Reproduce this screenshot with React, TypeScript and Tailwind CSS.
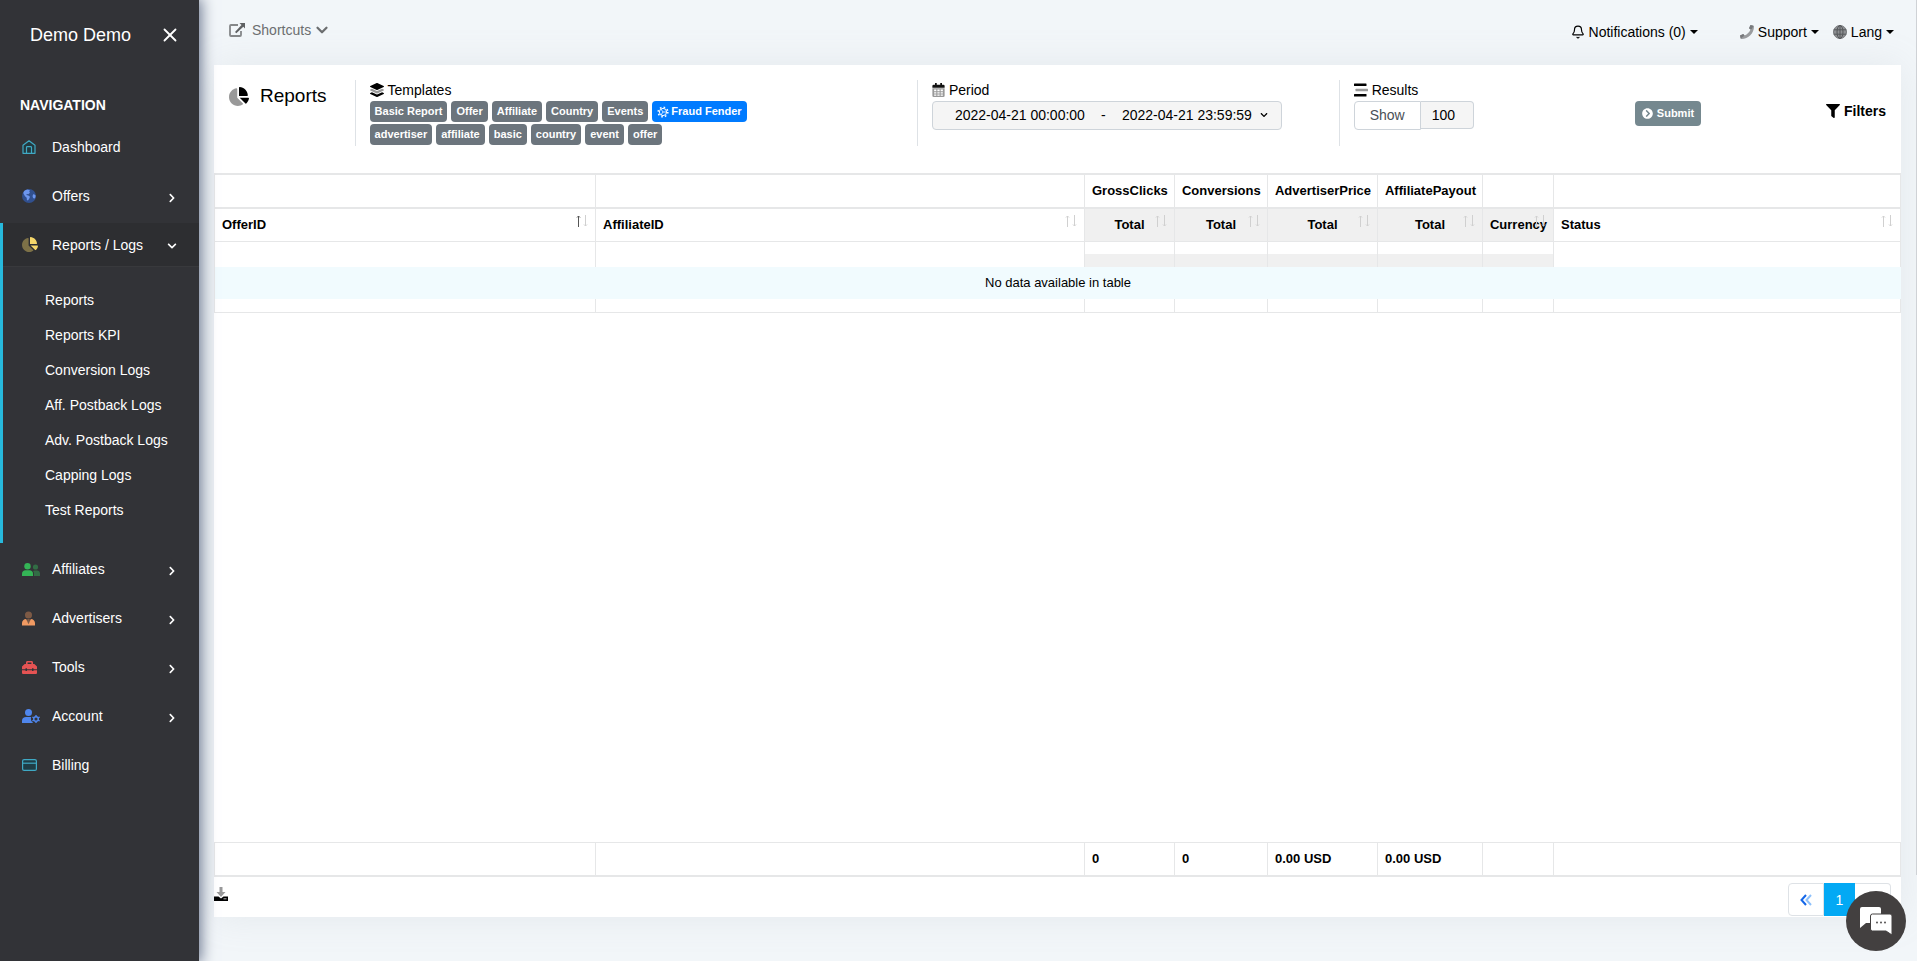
import { useState } from "react";
import type { ReactNode } from "react";
import { FaFilter, FaChevronRight, FaChevronDown, FaChevronCircleRight } from "react-icons/fa";
import { X, ChevronDown, Bell } from "lucide-react";

type IconProps = { className?: string };

function PieIcon({ className }: IconProps) {
  return (
    <svg viewBox="0 0 544 512" fill="currentColor" className={className} aria-hidden="true">
      <path d="M527.79 288H290.5l158.03 158.03c6.04 6.04 15.98 6.53 22.19.68 38.7-36.46 65.32-85.61 73.13-140.86 1.34-9.46-6.51-17.85-16.06-17.85zm-15.83-64.8C503.72 103.74 408.26 8.28 288.8.04 279.68-.59 272 7.1 272 16.24V240h223.77c9.14 0 16.82-7.68 16.19-16.8z" />
      <path
        opacity="0.4"
        d="M224 288V50.71c0-9.55-8.39-17.4-17.84-16.06C86.99 51.49-4.1 155.6.14 280.37 4.5 408.51 114.83 513.59 243.03 511.98c50.4-.63 96.97-16.87 135.26-44.03 7.9-5.6 8.42-17.23 1.57-24.08L224 288z"
      />
    </svg>
  );
}

function LayersIcon({ className }: IconProps) {
  return (
    <svg viewBox="0 0 512 512" fill="currentColor" className={className} aria-hidden="true">
      <path d="M12.41 148.02l232.94 105.67c6.8 3.09 14.49 3.09 21.29 0l232.94-105.67c16.55-7.51 16.55-32.52 0-40.03L266.65 2.31a25.6 25.6 0 0 0-21.29 0L12.41 107.98c-16.55 7.51-16.55 32.53 0 40.04z" />
      <path
        opacity="0.4"
        d="M499.59 236.3l-58.09-26.33-161.64 73.27a57.6 57.6 0 0 1-47.72 0L70.51 209.97l-58.1 26.33c-16.55 7.5-16.55 32.5 0 40l232.94 105.59c6.8 3.08 14.49 3.08 21.29 0L499.59 276.3c16.55-7.5 16.55-32.5 0-40z"
      />
      <path d="M499.59 364.3l-58.09-26.33-161.64 73.27a57.6 57.6 0 0 1-47.72 0L70.51 337.97l-58.1 26.33c-16.55 7.5-16.55 32.5 0 40l232.94 105.59c6.8 3.08 14.49 3.08 21.29 0L499.59 404.3c16.55-7.5 16.55-32.5 0-40z" />
    </svg>
  );
}

function CalendarIcon({ className }: IconProps) {
  return (
    <svg viewBox="0 0 14 16" className={className} aria-hidden="true">
      <path d="M0 5.5V3.5A1.5 1.5 0 0 1 1.5 2H3V0h2v2h4V0h2v2h1.5A1.5 1.5 0 0 1 14 3.5v2z" fill="#111" />
      <path d="M0 6h14v8.5a1.5 1.5 0 0 1-1.5 1.5h-11A1.5 1.5 0 0 1 0 14.5z" fill="#999" />
      <path d="M2 7.5h2.5v2H2zm3.7 0h2.6v2H5.7zm3.8 0H12v2H9.5zM2 10.5h2.5v1.5H2zm3.7 0h2.6v1.5H5.7zm3.8 0H12v1.5H9.5zM2 13h2.5v1.5H2zm3.7 0h2.6v1.5H5.7zm3.8 0H12v1.5H9.5z" fill="#fff" />
    </svg>
  );
}

function StreamIcon({ className }: IconProps) {
  return (
    <svg viewBox="0 0 14 14" fill="currentColor" className={className} aria-hidden="true">
      <rect x="0" y="0.5" width="12.5" height="2.6" rx="0.5" />
      <rect x="1.5" y="5.7" width="12.5" height="2.6" rx="0.5" opacity="0.4" />
      <rect x="0" y="10.9" width="12.5" height="2.6" rx="0.5" />
    </svg>
  );
}

function HouseIcon({ className }: IconProps) {
  return (
    <svg viewBox="0 0 14 14" fill="none" stroke="currentColor" strokeWidth="1.2" strokeLinejoin="round" className={className} aria-hidden="true">
      <path d="M1 5.3L7 .8l6 4.5v8H1z" fill="#23383e" />
      <path d="M4.5 13V7.5a.8.8 0 0 1 .8-.8h3.4a.8.8 0 0 1 .8.8V13" />
    </svg>
  );
}

function EarthIcon({ className }: IconProps) {
  return (
    <svg viewBox="0 0 14 14" className={className} aria-hidden="true">
      <circle cx="7" cy="7" r="7" fill="#31508f" />
      <path d="M2 2.2C3.200 1 4.500.5 5.800.4L8 1.500 7.200 2.800l.8.9-1.700 1.600-1.500-.2-.4 1 2 .4 1.600 1.200-.8 2-1.300 1.700-1-.4-.2-2.300-1.700-1.500L2 5.500 1.300 4zM11.500 5l2 1.200v2l-1.300 1.500-1.200-.9-.5-1.700z" fill="#6d96ee" />
    </svg>
  );
}

function UsersIcon({ className }: IconProps) {
  return (
    <svg viewBox="0 0 18 13" fill="currentColor" className={className} aria-hidden="true">
      <circle cx="5.5" cy="3.2" r="3.2" />
      <path d="M0 13v-2.2C0 8.6 1.6 7.2 3.5 7.2h4c2 0 3.5 1.4 3.5 3.6V13z" />
      <g opacity="0.45">
        <circle cx="13.5" cy="4" r="2.6" />
        <path d="M12 13v-2.5c0-1.2-.4-2-1-2.6.5-.3 1-.5 1.6-.5h2.4c1.7 0 3 1.2 3 3V13z" />
      </g>
    </svg>
  );
}

function UserTieIcon({ className }: IconProps) {
  return (
    <svg viewBox="0 0 14 15" className={className} aria-hidden="true">
      <circle cx="7" cy="3.8" r="3.8" fill="#7d5a45" />
      <path d="M5.8 8h2.4l.6 3-1.8 4-1.8-4z" fill="#7d5a45" />
      <path d="M4.5 8L7 13.8 9.5 8c2.6.2 4.5 1.7 4.5 4.3V15H0v-2.7C0 9.7 1.9 8.2 4.5 8z" fill="#f09a62" />
    </svg>
  );
}

function ToolboxIcon({ className }: IconProps) {
  return (
    <svg viewBox="0 0 15 13" fill="currentColor" className={className} aria-hidden="true">
      <path d="M4 3V1.5C4 .6 4.6 0 5.5 0h4c.9 0 1.5.6 1.5 1.5V3h1.3L15 5.5v2.7h-3.5v-.9H10v.9H5v-.9H3.5v.9H0V5.5L2.7 3zm1.6 0h3.8V1.6H5.6z" />
      <path d="M0 9.2h3.5v.9H5v-.9h5v.9h1.5v-.9H15V12a1 1 0 0 1-1 1H1a1 1 0 0 1-1-1z" />
    </svg>
  );
}

function UserCogIcon({ className }: IconProps) {
  return (
    <svg viewBox="0 0 18 14" fill="currentColor" className={className} aria-hidden="true">
      <circle cx="6.5" cy="3.5" r="3.5" />
      <path d="M0 14v-2.3C0 9.3 1.8 8 4 8h5.2c-.9 2 0 4.5 2 6z" />
      <circle cx="14" cy="10" r="2.3" fill="none" stroke="currentColor" strokeWidth="1.5" />
      <path d="M13.3 6h1.4v2h-1.4zm0 6h1.4v2h-1.4zM10 8.6l.7-1.2 1.7 1-.7 1.2zm5.6 3l.7-1.2 1.7 1-.7 1.2zM10 11.4l1.7-1 .7 1.2-1.7 1zM15.6 8.4l1.7-1 .7 1.2-1.7 1z" />
    </svg>
  );
}

function CardIcon({ className }: IconProps) {
  return (
    <svg viewBox="0 0 15 12" fill="none" stroke="currentColor" strokeWidth="1.2" className={className} aria-hidden="true">
      <rect x="0.6" y="0.6" width="13.8" height="10.8" rx="1.5" fill="#1f3d46" />
      <path d="M.6 4.2h13.8" />
    </svg>
  );
}

function ShareIcon({ className }: IconProps) {
  return (
    <svg viewBox="0 0 16 14" className={className} aria-hidden="true">
      <path d="M9 2H2a1 1 0 0 0-1 1v9a1 1 0 0 0 1 1h9a1 1 0 0 0 1-1V8" fill="none" stroke="#858789" strokeWidth="1.8" />
      <path d="M10.5 0H16v5.5l-1.700-1.700-7 6.500-1.300-1.300 6.500-7z" fill="#5f6163" />
    </svg>
  );
}

function PhoneIcon({ className }: IconProps) {
  return (
    <svg viewBox="0 0 14 14" className={className} aria-hidden="true">
      <path d="M10.5 0l2.9.7c.4.1.6.4.6.8C14 8.400 8.400 14 1.500 14c-.4 0-.7-.2-.8-.6L0 10.500 3.200 9l1.400 1.600C7.300 9.300 9.300 7.300 10.600 4.600L9 3.300z" fill="#9a9c9f" />
      <path d="M10.5 0l2.900.7-1.400 3-1.400.9L9 3.300zM0 10.500L3.200 9l1.400 1.600-3.900 2.800z" fill="#77797c" />
    </svg>
  );
}

function GlobeIcon({ className }: IconProps) {
  return (
    <svg viewBox="0 0 14 14" fill="none" stroke="#55575a" className={className} aria-hidden="true">
      <circle cx="7" cy="7" r="6.5" fill="#8e9093" stroke="#77797c" />
      <ellipse cx="7" cy="7" rx="3" ry="6.5" />
      <path d="M.8 4.8h12.4M.8 9.2h12.4M7 .5v13" />
    </svg>
  );
}

function GearIcon({ className }: IconProps) {
  return (
    <svg viewBox="0 0 12 12" fill="none" stroke="currentColor" className={className} aria-hidden="true">
      <circle cx="6" cy="6" r="3.6" />
      <circle cx="6" cy="6" r="4.8" strokeWidth="1.6" strokeDasharray="1.6 2.17" />
      <path d="M6 6h3.5M6 6L4 3M6 6L4 9" strokeWidth="0.8" />
    </svg>
  );
}

function DownloadIcon({ className }: IconProps) {
  return (
    <svg viewBox="0 0 14 14" className={className} aria-hidden="true">
      <path d="M5.5 0h3v5h3L7 10 2.500 5h3z" fill="#999" />
      <path d="M0 9.5h4.5L7 11.500l2.500-2H14V14H0z" fill="#000" />
      <path d="M9.5 11.800h3" stroke="#ccc" strokeWidth="0.9" />
    </svg>
  );
}

function ChatIcon({ className }: IconProps) {
  return (
    <svg viewBox="0 0 32 28" className={className} aria-hidden="true">
      <path d="M2 0h17a2 2 0 0 1 2 2v14H6l-6 5V2a2 2 0 0 1 2-2z" fill="#fff" />
      <path d="M12.5 7H30a2 2 0 0 1 2 2v19l-6-4H12.5a2 2 0 0 1-2-2V9a2 2 0 0 1 2-2z" fill="#fff" stroke="#434040" />
      <circle cx="17" cy="15.5" r="0.9" fill="#434040" />
      <circle cx="21" cy="15.5" r="0.9" fill="#434040" />
      <circle cx="25" cy="15.5" r="0.9" fill="#434040" />
    </svg>
  );
}

function Caret() {
  return (
    <svg viewBox="0 0 8 4" className="h-1 w-2" fill="currentColor" aria-hidden="true">
      <path d="M0 0h8L4 4z" />
    </svg>
  );
}

function SortArrows({ asc = false }: { asc?: boolean }) {
  return (
    <svg viewBox="0 0 12 12" className="absolute right-[7px] top-1.5 h-3 w-3" fill="none" aria-hidden="true">
      <path d="M2.5 12V1M1 2.5L2.5 1 4 2.5" stroke={asc ? "#555" : "#d0d0d0"} />
      <path d="M9.5 0v11M8 9.5L9.5 11 11 9.500" stroke="#d0d0d0" />
    </svg>
  );
}

const reportLinks = [
  "Reports",
  "Reports KPI",
  "Conversion Logs",
  "Aff. Postback Logs",
  "Adv. Postback Logs",
  "Capping Logs",
  "Test Reports",
];

const lowerNav = [
  { label: "Affiliates", icon: <UsersIcon className="h-[13px] w-[18px] text-[#34b556]" />, more: true },
  { label: "Advertisers", icon: <UserTieIcon className="h-[15px] w-[13px]" />, more: true },
  { label: "Tools", icon: <ToolboxIcon className="h-[13px] w-[15px] text-[#e55353]" />, more: true },
  { label: "Account", icon: <UserCogIcon className="h-[14px] w-[18px] text-[#4f86ec]" />, more: true },
  { label: "Billing", icon: <CardIcon className="h-3 w-[15px] text-[#3fa9c4]" />, more: false },
];

const columns = [
  { group: "", label: "OfferID", total: "", width: "w-[22.6%]", metric: false },
  { group: "", label: "AffiliateID", total: "", width: "w-[29%]", metric: false },
  { group: "GrossClicks", label: "Total", total: "0", width: "w-[90px]", metric: true },
  { group: "Conversions", label: "Total", total: "0", width: "w-[93px]", metric: true },
  { group: "AdvertiserPrice", label: "Total", total: "0.00 USD", width: "w-[110px]", metric: true },
  { group: "AffiliatePayout", label: "Total", total: "0.00 USD", width: "w-[105px]", metric: true },
  { group: "", label: "Currency", total: "", width: "w-[71px]", metric: true },
  { group: "", label: "Status", total: "", width: "", metric: false },
];

const templateRows = [
  ["Basic Report", "Offer", "Affiliate", "Country", "Events"],
  ["advertiser", "affiliate", "basic", "country", "event", "offer"],
];

function NavItem({ label, icon, more }: { label: string; icon: ReactNode; more?: boolean }) {
  return (
    <a href="#" className="mb-[5px] flex h-11 items-center pl-[22px] pr-[23px]">
      <span className="flex w-[30px] shrink-0 items-center">{icon}</span>
      <span className="flex-1">{label}</span>
      {more && <FaChevronRight className="mt-1 h-2.5 w-2" />}
    </a>
  );
}

function Sidebar({ onClose }: { onClose: () => void }) {
  return (
    <aside className="z-10 w-[199px] shrink-0 bg-[#323337] text-sm text-white shadow-[0_0_14px_2px_#67738c]">
      <div className="flex h-[70px] items-center justify-between pl-[30px] pr-[18px]">
        <span className="text-lg">Demo Demo</span>
        <button type="button" aria-label="Close menu" onClick={onClose}>
          <X className="h-[22px] w-[22px]" />
        </button>
      </div>
      <h2 className="flex h-[55px] items-center pl-5 pt-3.5 font-bold">NAVIGATION</h2>
      <nav>
        <NavItem label="Dashboard" icon={<HouseIcon className="h-[14px] w-[14px] text-[#3fa9c4]" />} />
        <NavItem label="Offers" icon={<EarthIcon className="h-[14px] w-[14px]" />} more />
        <div className="mb-1 border-l-[3px] border-[#27b9dc]">
          <a href="#" className="flex h-11 items-center border-b border-[#38393c] bg-[#2d2e31] pl-[19px] pr-[22px]">
            <span className="w-[30px] shrink-0">
              <PieIcon className="h-[15px] w-4 text-[#f5d76a]" />
            </span>
            <span className="flex-1">Reports / Logs</span>
            <FaChevronDown className="mt-0.5 h-2.5 w-2.5" />
          </a>
          <ul className="px-[42px] pb-4 pt-[15px]">
            {reportLinks.map((label) => (
              <li key={label}>
                <a href="#" className="flex h-[35px] items-center whitespace-nowrap">
                  {label}
                </a>
              </li>
            ))}
          </ul>
        </div>
        {lowerNav.map((item) => (
          <NavItem key={item.label} {...item} />
        ))}
      </nav>
    </aside>
  );
}

function TopBar() {
  return (
    <header className="flex h-[65px] items-start justify-between pl-[15px] pr-[7px] text-sm">
      <button type="button" className="mt-5 flex items-center text-[#6c6e70]">
        <ShareIcon className="mr-[7px] h-[14px] w-4" />
        Shortcuts
        <ChevronDown className="ml-0.5 h-[18px] w-[18px]" strokeWidth={3} />
      </button>
      <div className="mt-[22px] flex items-center text-black">
        <button type="button" className="mr-[42px] flex items-center gap-1">
          <Bell className="h-[14px] w-[14px]" />
          Notifications (0)
          <Caret />
        </button>
        <button type="button" className="mr-[14px] flex items-center gap-1">
          <PhoneIcon className="h-[14px] w-[14px]" />
          Support
          <Caret />
        </button>
        <button type="button" className="flex items-center gap-1">
          <GlobeIcon className="h-[14px] w-[14px]" />
          Lang
          <Caret />
        </button>
      </div>
    </header>
  );
}

function ReportControls() {
  return (
    <form className="grid h-[108px] grid-cols-12 pt-[15px] text-sm text-black" onSubmit={(e) => e.preventDefault()}>
      <h1 className="flex h-8 items-center whitespace-nowrap pl-[15px] text-[19px]">
        <PieIcon className="mr-[11px] h-[19px] w-5" />
        Reports
      </h1>

      <section className="col-span-4 h-[66px] border-l border-[#dee2e6] pl-[14px]">
        <h2 className="flex h-[21px] items-center gap-1 pb-0.5">
          <LayersIcon className="h-[14px] w-[14px]" />
          Templates
        </h2>
        <div className="space-y-0.5">
          {templateRows.map((row, i) => (
            <div key={i} className="flex gap-1">
              {row.map((name) => (
                <button
                  key={name}
                  type="button"
                  className="h-[21px] whitespace-nowrap rounded bg-[#6c757d] px-[5px] text-[11px] font-bold text-white"
                >
                  {name}
                </button>
              ))}
              {i === 0 && (
                <button
                  type="button"
                  className="flex h-[21px] items-center gap-0.5 whitespace-nowrap rounded bg-[#007bff] px-[5px] text-[11px] font-bold text-white"
                >
                  <GearIcon className="h-3 w-3" />
                  Fraud Fender
                </button>
              )}
            </div>
          ))}
        </div>
      </section>

      <section className="col-span-3 h-[66px] border-l border-[#dee2e6] pl-[14px]">
        <h2 className="flex h-[21px] items-center gap-1 pb-0.5">
          <CalendarIcon className="h-[14px] w-[13px]" />
          Period
        </h2>
        <button
          type="button"
          className="flex h-[29px] w-[350px] items-center whitespace-nowrap rounded border border-[#ced4da] bg-[#f5f5f5] pb-0.5 pl-[22px] pr-[13px]"
        >
          <span>2022-04-21 00:00:00</span>
          <span className="flex-1">-</span>
          <span>2022-04-21 23:59:59</span>
          <FaChevronDown className="ml-2 h-2 w-2" />
        </button>
      </section>

      <section className="col-span-2 h-[66px] border-l border-[#dee2e6] pl-[14px]">
        <h2 className="flex h-[21px] items-center gap-1 pb-0.5">
          <StreamIcon className="h-[14px] w-[14px]" />
          Results
        </h2>
        <div className="flex items-start">
          <label
            htmlFor="show"
            className="flex h-[29px] w-[67px] items-center rounded-l border border-[#ced4da] pb-0.5 pl-[15px] text-[#495057]"
          >
            Show
          </label>
          <input
            id="show"
            defaultValue="100"
            className="h-7 w-[53px] rounded-r border border-l-0 border-[#ced4da] bg-[#f5f5f5] pl-[11px]"
          />
        </div>
      </section>

      <div className="pl-[15px] pt-[21px]">
        <button
          type="submit"
          className="flex h-[25px] items-center gap-1 rounded-sm bg-[#75888f] px-[7px] text-[11px] font-bold text-white"
        >
          <FaChevronCircleRight className="h-[11px] w-[11px]" />
          Submit
        </button>
      </div>

      <div className="flex justify-end pr-[15px] pt-[21px]">
        <button type="button" className="flex h-5 items-center gap-1 font-bold">
          <FaFilter className="h-[14px] w-[14px]" />
          Filters
        </button>
      </div>
    </form>
  );
}

function Columns() {
  return (
    <colgroup>
      {columns.map((col, i) => (
        <col key={i} className={col.width} />
      ))}
    </colgroup>
  );
}

const line = "border-[#e6e7e8]";

function ReportTable() {
  return (
    <div className="flex-1">
      <table className={`w-full table-fixed border-separate border-spacing-0 border-l ${line} text-[13px] text-black`}>
        <Columns />
        <thead>
          <tr>
            {columns.map((col, i) => (
              <th key={i} className={`h-[34px] border-r border-t-2 ${line} px-[7px] py-0 text-left`}>
                {col.group}
              </th>
            ))}
          </tr>
          <tr>
            {columns.map((col, i) => (
              <th
                key={i}
                className={`relative h-[34px] border-r border-t-2 ${line} px-[7px] py-0 ${
                  col.metric ? "bg-[#f0f0f0] text-center" : "text-left"
                }`}
              >
                {col.label}
                <SortArrows asc={i === 0} />
              </th>
            ))}
          </tr>
        </thead>
        <tbody>
          <tr>
            {columns.map((_, i) => (
              <td key={i} className={`h-[13px] border-r border-t ${line} p-0`} />
            ))}
          </tr>
          <tr>
            {columns.map((col, i) => (
              <td key={i} className={`h-[13px] border-r ${line} p-0 ${col.metric ? "bg-[#f0f0f0]" : ""}`} />
            ))}
          </tr>
          <tr>
            <td colSpan={8} className="h-8 bg-[#f1fbfe] p-0 text-center">
              No data available in table
            </td>
          </tr>
          <tr>
            {columns.map((_, i) => (
              <td key={i} className={`h-[14px] border-b border-r ${line} p-0`} />
            ))}
          </tr>
        </tbody>
      </table>
    </div>
  );
}

function TotalsTable() {
  return (
    <table className={`w-full table-fixed border-separate border-spacing-0 border-l ${line} text-[13px] text-black`}>
      <Columns />
      <tbody>
        <tr>
          {columns.map((col, i) => (
            <td key={i} className={`h-[35px] border-b-2 border-r border-t ${line} px-[7px] py-0 font-bold`}>
              {col.total}
            </td>
          ))}
        </tr>
      </tbody>
    </table>
  );
}

function Pager() {
  return (
    <nav aria-label="Pages" className="mb-px flex h-[33px] text-sm">
      <a href="#" aria-label="First page" className="flex w-9 items-center justify-center rounded-l border border-[#dee2e6]">
        <svg viewBox="0 0 12 12" className="h-3 w-3" fill="none" strokeWidth="2" aria-hidden="true">
          <path d="M6 1L1.5 6 6 11" stroke="#1466e8" />
          <path d="M11 1L6.5 6l4.5 5" stroke="#8dc0fb" />
        </svg>
      </a>
      <a href="#" aria-current="page" className="flex w-[31px] items-center justify-center bg-[#03a9f4] text-white">
        1
      </a>
      <a href="#" aria-label="Last page" className="w-9 rounded-r border border-l-0 border-[#dee2e6]" />
    </nav>
  );
}

export default function App() {
  const [menuOpen, setMenuOpen] = useState(true);

  return (
    <div className="relative flex min-h-screen bg-[#f2f6f9] font-['Liberation_Sans',Arial,sans-serif]">
      {menuOpen && <Sidebar onClose={() => setMenuOpen(false)} />}

      <div className="flex min-w-0 flex-1 flex-col pl-[15px] pr-4">
        <TopBar />
        <main className="mb-11 flex flex-1 flex-col bg-white shadow-[0_0_35px_0_rgba(154,161,171,0.15)]">
          <ReportControls />
          <ReportTable />
          <TotalsTable />
          <div className="flex h-10 items-end justify-between pr-[10px]">
            <button type="button" aria-label="Download" className="mb-4">
              <DownloadIcon className="h-[14px] w-[14px]" />
            </button>
            <Pager />
          </div>
        </main>
      </div>

      {/* Scroll position marker */}
      <div className="absolute right-0 top-0 h-[91%] w-px bg-[#cfd2d6]" />

      {/* Chat launcher */}
      <button
        type="button"
        aria-label="Open chat"
        className="fixed bottom-[10px] right-[11px] z-20 flex h-[60px] w-[60px] items-center justify-center rounded-full bg-[#434040]"
      >
        <ChatIcon className="h-7 w-8" />
      </button>
    </div>
  );
}
